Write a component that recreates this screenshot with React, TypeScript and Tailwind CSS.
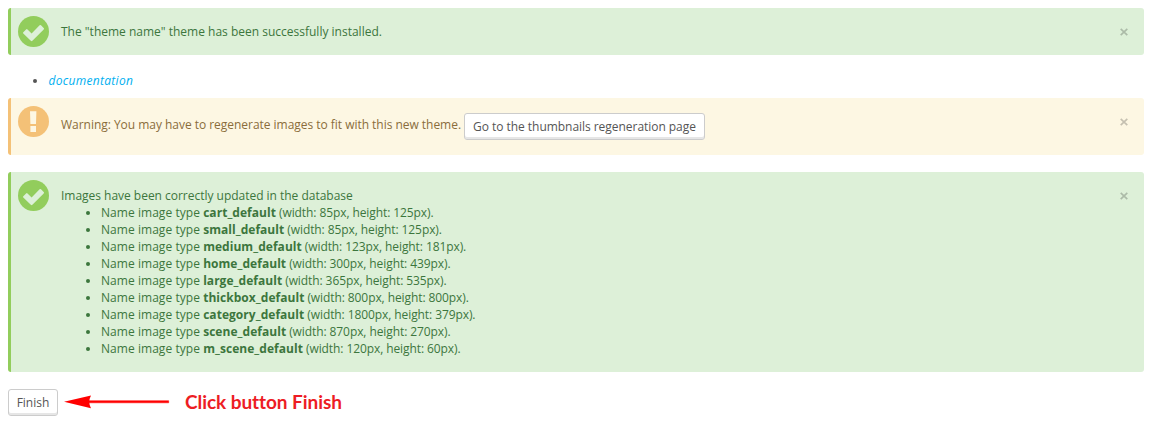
import type { ReactNode } from "react";

const imageTypes = [
  { name: "cart_default", width: 85, height: 125 },
  { name: "small_default", width: 85, height: 125 },
  { name: "medium_default", width: 123, height: 181 },
  { name: "home_default", width: 300, height: 439 },
  { name: "large_default", width: 365, height: 535 },
  { name: "thickbox_default", width: 800, height: 800 },
  { name: "category_default", width: 1800, height: 379 },
  { name: "scene_default", width: 870, height: 270 },
  { name: "m_scene_default", width: 120, height: 60 },
];

function CheckIcon() {
  return (
    <svg width="31" height="31" viewBox="0 0 31 31" className="shrink-0">
      <circle cx="15.5" cy="15.5" r="15.5" fill="#92cd5c" />
      <path
        d="M5.3 16.2 L8.1 13.4 Q8.8 12.8 9.5 13.4 L13.6 17.4 L21.6 9.3 Q22.3 8.7 23 9.3 L25.7 12 Q26.4 12.8 25.7 13.5 L14.4 24.8 Q13.6 25.5 12.8 24.8 L5.3 17.5 Q4.7 16.9 5.3 16.2 Z"
        fill="#ddf0d8"
      />
    </svg>
  );
}

function WarningIcon() {
  return (
    <svg width="31" height="31" viewBox="0 0 31 31" className="shrink-0">
      <circle cx="15.5" cy="15.5" r="15.5" fill="#f4c177" />
      <path d="M12 5.2 H18.4 L18 18 H12.4 Z M12.4 20 H18 V26 H12.4 Z" fill="#fdf7e3" />
    </svg>
  );
}

function CloseButton() {
  return (
    <button type="button" aria-label="Close" className="flex size-[8px] shrink-0">
      <svg width="8" height="8" viewBox="0 0 8 8" fill="none" stroke="#000" strokeOpacity="0.22" strokeWidth="1.7">
        <path d="M0.7 0.8 L7.3 7.2 M7.3 0.8 L0.7 7.2" />
      </svg>
    </button>
  );
}

function Alert({ kind, children }: { kind: "success" | "warning"; children: ReactNode }) {
  const success = kind === "success";
  return (
    <div
      className={
        success
          ? "flex items-start rounded-[3px] border-l-3 border-[#92cd5c] bg-[#ddf0d8] pt-2 pr-4 pb-[15px] pl-[7px] text-[#3c763d]"
          : "flex items-start rounded-[3px] border-l-3 border-[#f4c177] bg-[#fdf7e3] pt-2 pr-4 pb-[15px] pl-[7px] text-[#8a6d3b]"
      }
    >
      <div className="h-4 shrink-0">{success ? <CheckIcon /> : <WarningIcon />}</div>
      <div className="ml-3 grow pt-[7px]">{children}</div>
      <div className="pt-[12px]">
        <CloseButton />
      </div>
    </div>
  );
}

function Button({ children, className }: { children: ReactNode; className: string }) {
  return (
    <button
      type="button"
      className={`${className} h-[27px] shrink-0 rounded-[3px] border border-[#ccc] bg-white pb-1 text-center whitespace-nowrap text-[#555] shadow-[inset_0_-2px_0_#e6e6e6]`}
    >
      {children}
    </button>
  );
}

export default function App() {
  return (
    <main className="h-[425px] bg-white px-2 pt-2 pr-[7px] font-['Open_Sans',sans-serif] text-[12px] leading-[17px] text-[#555]">
      <Alert kind="success">The "theme name" theme has been successfully installed.</Alert>
      <ul className="mt-[17px] mb-[9px] list-disc pl-10">
        <li>
          <a href="#" className="ml-[0.5px] tracking-[0.3px] text-[#00aff0] italic">
            documentation
          </a>
        </li>
      </ul>
      <Alert kind="warning">
        <div className="flex items-start">
          <span className="mt-[3px] w-[403px] tracking-[-0.03px] whitespace-nowrap">
            Warning: You may have to regenerate images to fit with this new theme.
          </span>
          <Button className="w-[241px] pt-1 tracking-[-0.04px]">Go to the thumbnails regeneration page</Button>
        </div>
      </Alert>
      <div className="mt-[17px]">
        <Alert kind="success">
          <p className="tracking-[-0.02px]">Images have been correctly updated in the database</p>
          <ul className="list-disc pl-10">
            {imageTypes.map((type) => (
              <li key={type.name}>
                <span className="tracking-[0.05px]">Name image type </span>
                <strong className="font-bold tracking-[0.04px]">{type.name}</strong>
                <span className="tracking-[-0.09px]">
                  {" "}
                  (width: {type.width}px, height: {type.height}px).
                </span>
              </li>
            ))}
          </ul>
        </Alert>
      </div>
      <div className="mt-[17px] flex items-start">
        <Button className="w-[50px] pt-1">Finish</Button>
        <svg width="106" height="14" viewBox="0 0 106 14" className="mt-[6px] ml-[6px]">
          <path d="M24 5.7 H104.7 V7.8 H24 Z" fill="#f00" stroke="#f00" strokeWidth="0.5" />
          <path d="M0 6.8 L27 0.4 Q23.5 7 27 13.2 Z" fill="#f00" />
        </svg>
        <span className="ml-[15px] font-['Lato',sans-serif] text-[19px] leading-[26px] font-bold tracking-[-0.06px] whitespace-nowrap text-[#ed1c24]">
          Click button Finish
        </span>
      </div>
    </main>
  );
}
